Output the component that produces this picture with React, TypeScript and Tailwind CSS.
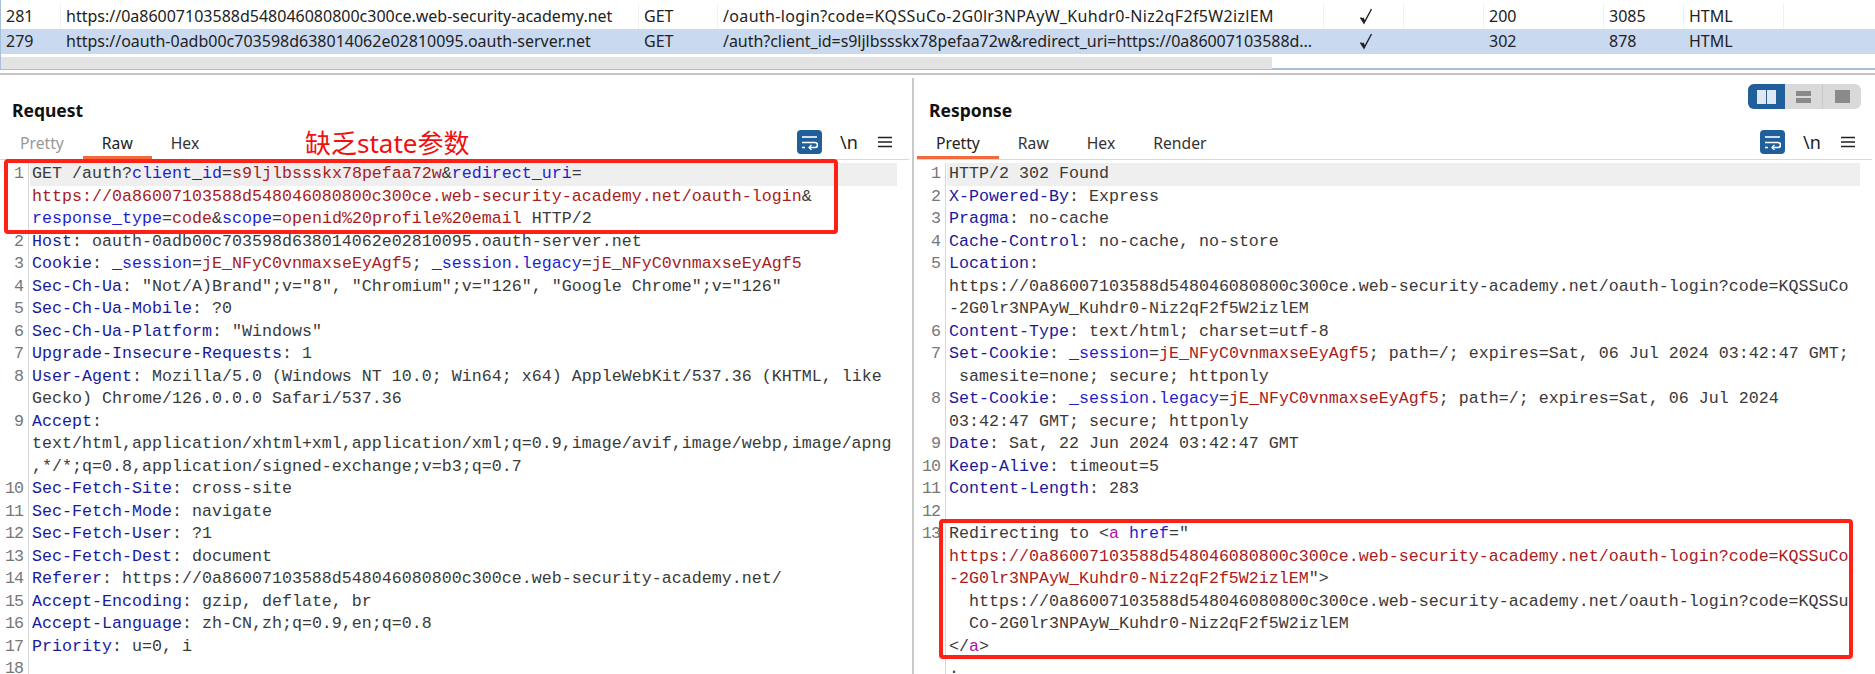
import React from "react";

type Seg = [string, string];
type Row = { n?: number; s: Seg[] };

const K = "text-[#1a1a9c]";
const P = "text-[#1f1fd0]";
const V = "text-[#a81c1c]";
const T = "text-[#3a3a3a]";
const M = "text-[#b010b0]";

const URL_A = "https://0a86007103588d548046080800c300ce.web-security-academy.net/oauth-login";

const reqRows: Row[] = [
  { n: 1, s: [[T, "GET /auth?"], [P, "client_id"], [T, "="], [V, "s9ljlbssskx78pefaa72w"], [T, "&"], [P, "redirect_uri"], [T, "="]] },
  { s: [[V, URL_A], [T, "&"]] },
  { s: [[P, "response_type"], [T, "="], [V, "code"], [T, "&"], [P, "scope"], [T, "="], [V, "openid%20profile%20email"], [T, " HTTP/2"]] },
  { n: 2, s: [[K, "Host"], [T, ": oauth-0adb00c703598d638014062e02810095.oauth-server.net"]] },
  { n: 3, s: [[K, "Cookie"], [T, ": "], [P, "_session"], [T, "="], [V, "jE_NFyC0vnmaxseEyAgf5"], [T, "; "], [P, "_session.legacy"], [T, "="], [V, "jE_NFyC0vnmaxseEyAgf5"]] },
  { n: 4, s: [[K, "Sec-Ch-Ua"], [T, ': "Not/A)Brand";v="8", "Chromium";v="126", "Google Chrome";v="126"']] },
  { n: 5, s: [[K, "Sec-Ch-Ua-Mobile"], [T, ": ?0"]] },
  { n: 6, s: [[K, "Sec-Ch-Ua-Platform"], [T, ': "Windows"']] },
  { n: 7, s: [[K, "Upgrade-Insecure-Requests"], [T, ": 1"]] },
  { n: 8, s: [[K, "User-Agent"], [T, ": Mozilla/5.0 (Windows NT 10.0; Win64; x64) AppleWebKit/537.36 (KHTML, like"]] },
  { s: [[T, "Gecko) Chrome/126.0.0.0 Safari/537.36"]] },
  { n: 9, s: [[K, "Accept"], [T, ":"]] },
  { s: [[T, "text/html,application/xhtml+xml,application/xml;q=0.9,image/avif,image/webp,image/apng"]] },
  { s: [[T, ",*/*;q=0.8,application/signed-exchange;v=b3;q=0.7"]] },
  { n: 10, s: [[K, "Sec-Fetch-Site"], [T, ": cross-site"]] },
  { n: 11, s: [[K, "Sec-Fetch-Mode"], [T, ": navigate"]] },
  { n: 12, s: [[K, "Sec-Fetch-User"], [T, ": ?1"]] },
  { n: 13, s: [[K, "Sec-Fetch-Dest"], [T, ": document"]] },
  { n: 14, s: [[K, "Referer"], [T, ": https://0a86007103588d548046080800c300ce.web-security-academy.net/"]] },
  { n: 15, s: [[K, "Accept-Encoding"], [T, ": gzip, deflate, br"]] },
  { n: 16, s: [[K, "Accept-Language"], [T, ": zh-CN,zh;q=0.9,en;q=0.8"]] },
  { n: 17, s: [[K, "Priority"], [T, ": u=0, i"]] },
  { n: 18, s: [] },
];

const resRows: Row[] = [
  { n: 1, s: [[T, "HTTP/2 302 Found"]] },
  { n: 2, s: [[K, "X-Powered-By"], [T, ": Express"]] },
  { n: 3, s: [[K, "Pragma"], [T, ": no-cache"]] },
  { n: 4, s: [[K, "Cache-Control"], [T, ": no-cache, no-store"]] },
  { n: 5, s: [[K, "Location"], [T, ":"]] },
  { s: [[T, URL_A + "?code=KQSSuCo"]] },
  { s: [[T, "-2G0lr3NPAyW_Kuhdr0-Niz2qF2f5W2izlEM"]] },
  { n: 6, s: [[K, "Content-Type"], [T, ": text/html; charset=utf-8"]] },
  { n: 7, s: [[K, "Set-Cookie"], [T, ": "], [P, "_session"], [T, "="], [V, "jE_NFyC0vnmaxseEyAgf5"], [T, "; path=/; expires=Sat, 06 Jul 2024 03:42:47 GMT;"]] },
  { s: [[T, " samesite=none; secure; httponly"]] },
  { n: 8, s: [[K, "Set-Cookie"], [T, ": "], [P, "_session.legacy"], [T, "="], [V, "jE_NFyC0vnmaxseEyAgf5"], [T, "; path=/; expires=Sat, 06 Jul 2024"]] },
  { s: [[T, "03:42:47 GMT; secure; httponly"]] },
  { n: 9, s: [[K, "Date"], [T, ": Sat, 22 Jun 2024 03:42:47 GMT"]] },
  { n: 10, s: [[K, "Keep-Alive"], [T, ": timeout=5"]] },
  { n: 11, s: [[K, "Content-Length"], [T, ": 283"]] },
  { n: 12, s: [] },
  { n: 13, s: [[T, "Redirecting to <"], [M, "a"], [T, " "], [P, "href"], [T, '="']] },
  { s: [[V, URL_A + "?code=KQSSuCo"]] },
  { s: [[V, "-2G0lr3NPAyW_Kuhdr0-Niz2qF2f5W2izlEM"], [T, '">']] },
  { s: [[T, "  https://0a86007103588d548046080800c300ce.web-security-academy.net/oauth-login?code=KQSSu"]] },
  { s: [[T, "  Co-2G0lr3NPAyW_Kuhdr0-Niz2qF2f5W2izlEM"]] },
  { s: [[T, "</"], [M, "a"], [T, ">"]] },
  { s: [[T, "."]] },
];

function WrapIcon() {
  return (
    <div className="w-[25px] h-[24px] rounded-[4px] bg-[#215f9b] flex items-center justify-center">
      <svg width="17" height="15" viewBox="0 0 17 15" fill="none" stroke="#fff" strokeWidth="1.6">
        <path d="M1 2h15" />
        <path d="M1 7.5h13a2.4 2.4 0 0 1 0 5H8" />
        <path d="M10.5 10 8 12.5l2.5 2.5" strokeWidth="1.3" />
        <path d="M1 12.5h3" />
      </svg>
    </div>
  );
}

function Tools() {
  return (
    <div className="flex items-center h-[24px] mr-[17px]">
      <WrapIcon />
      <span className="ml-[18px] w-[15px] text-[18px] leading-[20px] text-[#222] font-['Noto_Sans',sans-serif]">\n</span>
      <svg className="ml-[23px]" width="14" height="12" viewBox="0 0 14 12" stroke="#222" strokeWidth="1.6">
        <path d="M0 1.5h14M0 6h14M0 10.5h14" />
      </svg>
    </div>
  );
}

function CodeRows({ rows }: { rows: Row[] }) {
  return (
    <div className="pt-[3px] font-['Liberation_Mono',monospace] text-[16.67px] leading-[22.5px] whitespace-pre">
      {rows.map((r, i) => (
        <div key={i} className="flex h-[22.5px]">
          <div className="w-[28px] pr-[5px] text-right text-[#777] tracking-[-1px] shrink-0">{r.n ?? ""}</div>
          <div className="w-[2px] shrink-0 border-l border-[#d8d8d8]" />
          <div className={`flex-1 pl-[2px] mr-[15px] overflow-hidden ${i === 0 ? "bg-[#efefef]" : ""}`}>
            {r.s.map((seg, j) => (
              <span key={j} className={seg[0]}>{seg[1]}</span>
            ))}
          </div>
        </div>
      ))}
    </div>
  );
}

function Panel({ title, tabs, active, rows, toggle, className, tabStart }: {
  title: string; tabs: string[]; active: string; rows: Row[]; toggle?: boolean; className: string; tabStart: string;
}) {
  return (
    <div className={`relative overflow-hidden ${className}`}>
      <div className="h-[55px] flex justify-between items-start">
        <div className="pl-3 pt-[23px] text-[17.5px] leading-[24px] font-bold text-[#111] font-['Noto_Sans',sans-serif]">{title}</div>
        {toggle && (
          <div className="mt-[9px] mr-[14px] flex h-[25px] w-[113px] rounded-[6px] overflow-hidden bg-[#d9d9d9]">
            <div className="w-[37px] bg-[#215f9b] flex items-center justify-center gap-px">
              <div className="w-[9px] h-[14px] bg-[#dfe8f2]" />
              <div className="w-[9px] h-[14px] bg-[#dfe8f2]" />
            </div>
            <div className="w-[38px] border-r border-[#c8c8c8] flex flex-col items-center justify-center gap-[2px]">
              <div className="w-[15px] h-[5px] bg-[#8a8a8a]" />
              <div className="w-[15px] h-[5px] bg-[#8a8a8a]" />
            </div>
            <div className="flex-1 flex items-center justify-center">
              <div className="w-[15px] h-[13px] bg-[#8a8a8a]" />
            </div>
          </div>
        )}
      </div>
      <div className={`h-[30px] flex justify-between border-b border-[#d9d9d9] mr-[3px] ${tabStart}`}>
        <div className="flex h-full font-['Noto_Sans',sans-serif] text-[15.7px]">
          {tabs.map((t) => (
            <div
              key={t}
              className={`px-[19px] pt-[2px] h-[29px] leading-[22px] border-b-[3px] ${
                t === active ? "border-[#f26a3d] text-[#222]" : "border-transparent text-[#333]"
              } ${t === "Pretty" && active !== "Pretty" ? "text-[#999]" : ""}`}
            >
              {t}
            </div>
          ))}
        </div>
        <Tools />
      </div>
      <CodeRows rows={rows} />
    </div>
  );
}

const cols = "grid grid-cols-[60px_578px_79px_606px_80px_80px_120px_80px_100px_1fr]";

function Check() {
  return (
    <svg className="ml-[30px] mt-[4px]" width="14" height="17" viewBox="0 0 14 17" fill="none" stroke="#222">
      <path d="M1.5 9.5 5 15 12.5 1" strokeWidth="1.4" />
      <path d="M3.5 10 5.2 13.5" strokeWidth="2.4" />
    </svg>
  );
}

function TableRow({ cells, selected }: { cells: string[]; selected?: boolean }) {
  return (
    <div className={`${cols} h-[25px] ${selected ? "bg-[#c9d9f0]" : ""}`}>
      {cells.map((c, i) => (
        <div key={i} className={`pl-[5px] leading-[24px] overflow-hidden whitespace-nowrap ${i === 3 ? (selected ? "tracking-[-0.04px]" : "tracking-[0.35px]") : ""} ${i < 9 ? "border-r border-[#f1f1f1]" : ""} ${selected ? "border-transparent" : ""}`}>
          {c === "check" ? <Check /> : c}
        </div>
      ))}
    </div>
  );
}

export default function App() {
  return (
    <div className="w-[1875px] h-[674px] overflow-hidden bg-white flex flex-col">
      <div className="h-[70px] shrink-0 border-l-2 border-b-2 border-[#a9bfd8] font-['Noto_Sans',sans-serif] text-[16px] text-[#222] -ml-px">
        <div className="h-[4px]" />
        <TableRow cells={["281", "https://0a86007103588d548046080800c300ce.web-security-academy.net", "GET", "/oauth-login?code=KQSSuCo-2G0lr3NPAyW_Kuhdr0-Niz2qF2f5W2izlEM", "check", "", "200", "3085", "HTML", ""]} />
        <TableRow selected cells={["279", "https://oauth-0adb00c703598d638014062e02810095.oauth-server.net", "GET", "/auth?client_id=s9ljlbssskx78pefaa72w&redirect_uri=https://0a86007103588d...", "check", "", "302", "878", "HTML", ""]} />
        <div className="h-[3px]" />
        <div className="h-[12px] w-[1271px] bg-[#e3e3e3]" />
      </div>
      <div className="h-[3px] shrink-0" />
      <div className="h-[2px] shrink-0 bg-[#c9c4c4]" />
      <div className="flex flex-1 min-h-0">
        <div className="w-[912px] shrink-0 relative">
          <Panel title="Request" tabs={["Pretty", "Raw", "Hex"]} active="Raw" rows={reqRows} className="h-full" tabStart="pl-px" />
          <div className="absolute left-[305px] top-[50px] text-[26px] leading-[36px] text-[#f01010] font-['Noto_Sans','Noto_Sans_CJK_SC',sans-serif]">缺乏state参数</div>
          <div className="absolute left-[4px] top-[84px] w-[834px] h-[75px] border-4 border-[#ff2016] rounded-[4px]" />
        </div>
        <div className="w-[2px] shrink-0 mt-[3px] bg-[#c9c9c9]" />
        <div className="flex-1 relative min-w-0 ml-[3px]">
          <Panel title="Response" tabs={["Pretty", "Raw", "Hex", "Render"]} active="Pretty" rows={resRows} toggle className="h-full" tabStart="" />
          <div className="absolute left-[22px] top-[444px] w-[914px] h-[140px] border-4 border-[#ff2016] rounded-[4px]" />
        </div>
      </div>
    </div>
  );
}
